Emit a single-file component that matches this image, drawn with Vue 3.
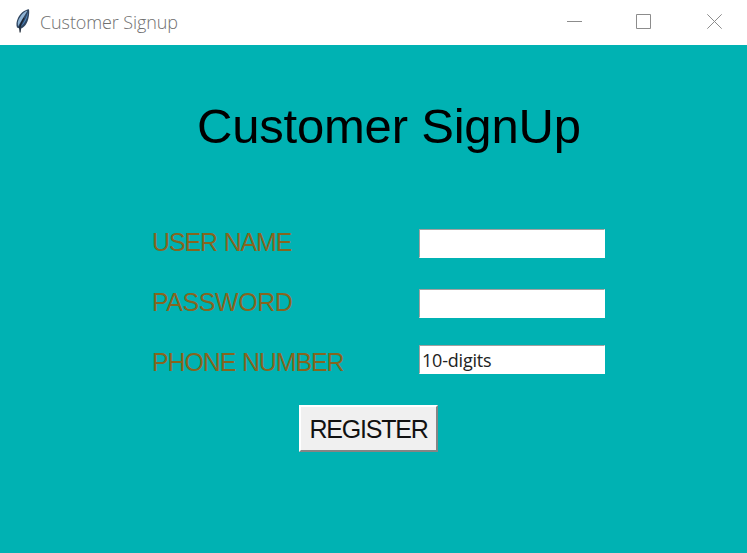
<script setup>
import { ref } from 'vue'

const fields = ref([
  { id: 'user', label: 'USER NAME', value: '' },
  { id: 'password', label: 'PASSWORD', value: '' },
  { id: 'phone', label: 'PHONE NUMBER', value: '10-digits' },
])
</script>

<template>
  <div class="window">
    <header class="titlebar">
      <svg class="feather" width="16" height="26" viewBox="0 0 16 26">
        <path d="M14 1.200C9.500 1.600 5.300 5.400 3 10C1.400 13.500 1 17 2 19.400L4.400 20.500L5.200 24L6.400 20.300C10 18.900 12.500 14.700 13.500 10C14.200 6.800 14.400 3.500 14 1.200Z" fill="#2f4560" />
        <path d="M11.500 2.800C7.500 5 4 9.500 2.800 14.500L3 18.600C6.300 13 9.300 8 12.300 3Z" fill="#8fb3d4" />
        <path d="M13 4C11.500 9 9 14 6 18.500C10 15.500 12.800 9.500 13 4Z" fill="#4b86c0" />
        <path d="M9 10C7.500 12.500 5.700 15.500 4.800 19L5.100 24.500" fill="none" stroke="#18202b" stroke-width="1.100" />
      </svg>
      <span class="caption">Customer Signup</span>
      <div class="controls">
        <svg width="15" height="15" viewBox="0 0 15 15"><path d="M0 7.500H15" /></svg>
        <svg width="15" height="15" viewBox="0 0 15 15"><path d="M.5 .5H14.500V14.500H.5Z" /></svg>
        <svg class="close" width="15" height="15" viewBox="0 0 15 15"><path d="M.3 .3L14.700 14.700M14.700 .3L.3 14.700" /></svg>
      </div>
    </header>
    <main class="content">
      <h1>Customer SignUp</h1>
      <form @submit.prevent>
        <div v-for="f in fields" :key="f.id" class="row" :class="f.id">
          <label :for="f.id">{{ f.label }}</label>
          <input :id="f.id" v-model="f.value" type="text" autocomplete="off" spellcheck="false" />
        </div>
        <button type="submit">REGISTER</button>
      </form>
    </main>
  </div>
</template>

<style>
body {
  margin: 0;
}
</style>

<style scoped>
.window {
  width: 747px;
  height: 553px;
  display: flex;
  flex-direction: column;
  overflow: hidden;
  background: #00b2b3;
}
.titlebar {
  box-sizing: border-box;
  height: 45px;
  flex: none;
  display: flex;
  align-items: center;
  padding: 0 25px 2px 15px;
  background: #fff;
}
.feather {
  margin: 0 9px 1px 0;
}
.caption {
  font: 18px/24px "Open Sans", "Noto Sans", sans-serif;
  font-weight: 300;
  letter-spacing: -0.1px;
  color: #707070;
  white-space: nowrap;
}
.controls {
  margin-left: auto;
  display: flex;
  gap: 54px;
}
.controls svg {
  fill: none;
  stroke: #8c8c8c;
  stroke-width: 1;
}
.controls .close {
  margin-left: 2px;
}
.content {
  padding: 53px 0 0 152px;
}
h1 {
  margin: 0 0 0 45px;
  font: 49px/56px "Liberation Sans", Arial, sans-serif;
  letter-spacing: -0.2px;
  color: #000;
  white-space: nowrap;
}
form {
  padding-top: 73px;
}
.row {
  display: flex;
  height: 60px;
}
.row.phone {
  height: 58px;
}
label {
  width: 267px;
  font: 25px/30px "Liberation Sans", Arial, sans-serif;
  color: #86651f;
  white-space: nowrap;
}
.user label {
  letter-spacing: -1.15px;
  word-spacing: 1px;
}
.password label {
  letter-spacing: -0.45px;
}
.phone label {
  letter-spacing: -1.15px;
  word-spacing: 1px;
}
input {
  box-sizing: border-box;
  width: 186px;
  height: 29px;
  margin: 2px 0 0;
  padding: 0 2px;
  border: 1px solid #fff;
  border-top-color: #a0a0a0;
  border-left-color: #a0a0a0;
  border-radius: 0;
  background: #fff;
  color: #222;
  font: 18px/24px "Open Sans", "Noto Sans", sans-serif;
  letter-spacing: -0.2px;
  outline: none;
}
.phone input {
  margin-top: -2px;
}
button {
  display: block;
  box-sizing: border-box;
  width: 139px;
  height: 47px;
  margin-left: 147px;
  padding: 0;
  border: 2px solid #fff;
  border-right: 2px solid #858585;
  border-bottom: 2px solid #858585;
  border-radius: 0;
  background: #f0f0f0;
  color: #111;
  font: 25px/44px "Liberation Sans", Arial, sans-serif;
  letter-spacing: -1.2px;
}
</style>
